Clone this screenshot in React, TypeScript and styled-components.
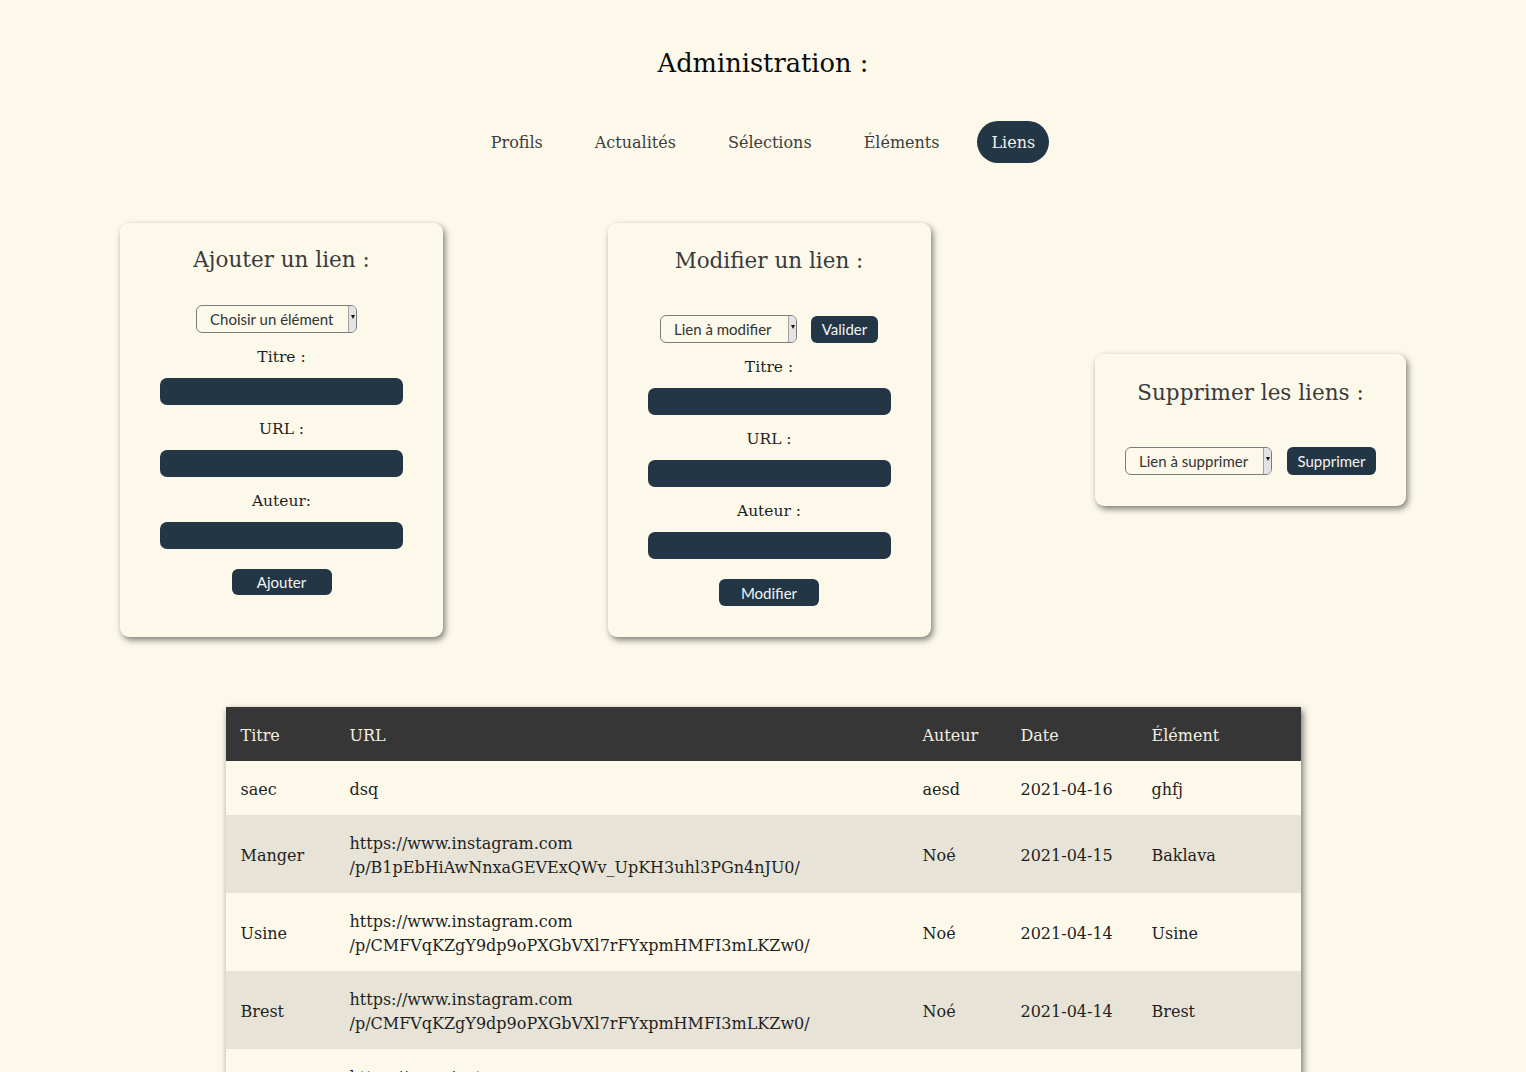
import React from "react";
import styled, { createGlobalStyle } from "styled-components";

const GlobalStyle = createGlobalStyle`
  html, body { margin: 0; padding: 0; background: #fcf9eb; }
  body { font-family: "DejaVu Serif", "Liberation Serif", serif; color: #222; }
  * { box-sizing: border-box; }
`;

const Page = styled.div`
  display: flex;
  flex-direction: column;
  align-items: center;
  padding-top: 48px;
  padding-bottom: 60px;
`;

const Title = styled.h1`
  margin: 0;
  font-size: 25.7px;
  line-height: 30px;
  font-weight: normal;
  color: #0a0a0a;
`;

const Nav = styled.nav`
  display: flex;
  gap: 24px;
  margin-top: 43px;
`;

const NavItem = styled.a<{ $active?: boolean }>`
  height: 42px;
  padding: 0 14px;
  display: flex;
  align-items: center;
  border-radius: 21px;
  font-size: 16px;
  text-decoration: none;
  color: ${(p) => (p.$active ? "#f4f1e6" : "#3d3d3d")};
  background: ${(p) => (p.$active ? "#233645" : "transparent")};
`;

const CardRow = styled.div`
  align-self: stretch;
  display: flex;
  justify-content: space-between;
  align-items: stretch;
  padding: 0 120px;
  margin-top: 60px;
`;

const Card = styled.section<{
  $width: number;
  $centered?: boolean;
  $padTop: number;
  $padBottom: number;
}>`
  width: ${(p) => p.$width}px;
  align-self: ${(p) => (p.$centered ? "center" : "stretch")};
  background: #fcf9eb;
  border-radius: 9px;
  box-shadow: 2px 3px 6px rgba(0, 0, 0, 0.5);
  padding: ${(p) => p.$padTop}px 40px ${(p) => p.$padBottom}px;
  display: flex;
  flex-direction: column;
  align-items: center;
`;

const CardTitle = styled.h2<{ $gap: number }>`
  margin: 0 0 ${(p) => p.$gap}px;
  font-size: 21.5px;
  line-height: 26px;
  font-weight: normal;
  color: #3a3a3a;
  white-space: nowrap;
`;

const FieldLabel = styled.label`
  display: block;
  margin: 14px 0 11px;
  font-size: 15.5px;
  line-height: 20px;
  color: #1e1e1e;
`;

const TextInput = styled.input`
  width: 100%;
  height: 27px;
  border: none;
  border-radius: 7px;
  background: #233645;
  color: #fff;
  outline: none;
`;

const ControlRow = styled.div<{ $gap: number }>`
  display: flex;
  align-items: center;
  gap: ${(p) => p.$gap}px;
`;

const SelectBox = styled.div<{ $width: number; $shift?: number }>`
  width: ${(p) => p.$width}px;
  height: 28px;
  margin-right: ${(p) => (p.$shift ?? 0) * 2}px;
  display: flex;
  align-items: stretch;
  border: 1px solid #7c7c7c;
  border-radius: 6px;
  overflow: hidden;
  background: #fcf9eb;
`;

const SelectText = styled.span`
  flex: 1;
  display: flex;
  align-items: center;
  padding-left: 13px;
  font-family: Lato, "Noto Sans", sans-serif;
  font-size: 15px;
  color: #333;
  white-space: nowrap;
`;

const SelectArrow = styled.span`
  width: 8px;
  background: #e3e3e3;
  border-left: 1px solid #a0a0a0;
  display: flex;
  justify-content: center;
  padding-top: 9px;

  &::after {
    content: "";
    width: 0;
    height: 0;
    border-left: 2.5px solid transparent;
    border-right: 2.5px solid transparent;
    border-top: 4px solid #111;
  }
`;

const Button = styled.button<{ $width: number; $height?: number; $top?: number }>`
  width: ${(p) => p.$width}px;
  height: ${(p) => p.$height ?? 27}px;
  margin-top: ${(p) => p.$top ?? 0}px;
  border: none;
  border-radius: 6px;
  background: #233645;
  color: #f3f3f3;
  font-family: Lato, "Noto Sans", sans-serif;
  font-size: 15px;
  padding: 0;
  cursor: pointer;
`;

const Table = styled.table`
  margin-top: 70px;
  width: 1075px;
  border-collapse: collapse;
  table-layout: fixed;
  box-shadow: 2px 3px 7px rgba(0, 0, 0, 0.55);
  font-size: 16px;
`;

const Col = styled.col<{ $w: number }>`
  width: ${(p) => p.$w}px;
`;

const Th = styled.th`
  background: #363636;
  color: #f3efe3;
  font-weight: normal;
  text-align: left;
  padding: 17px 15px 13px;
  line-height: 24px;
  height: 54px;
`;

const Tr = styled.tr<{ $alt: boolean }>`
  background: ${(p) => (p.$alt ? "#e7e3d7" : "#fcf9eb")};
`;

const Td = styled.td`
  padding: 17px 15px 13px;
  line-height: 24px;
  vertical-align: middle;
  color: #1f1f1f;
`;

const UrlLine = styled.span`
  display: block;
  white-space: nowrap;
`;

function Select({ width, label, shift }: { width: number; label: string; shift?: number }) {
  return (
    <SelectBox $width={width} $shift={shift}>
      <SelectText>{label}</SelectText>
      <SelectArrow />
    </SelectBox>
  );
}

type Row = { titre: string; url: string; auteur: string; date: string; element: string };

const rows: Row[] = [
  { titre: "saec", url: "dsq", auteur: "aesd", date: "2021-04-16", element: "ghfj" },
  {
    titre: "Manger",
    url: "https://www.instagram.com/p/B1pEbHiAwNnxaGEVExQWv_UpKH3uhl3PGn4nJU0/",
    auteur: "Noé",
    date: "2021-04-15",
    element: "Baklava",
  },
  {
    titre: "Usine",
    url: "https://www.instagram.com/p/CMFVqKZgY9dp9oPXGbVXl7rFYxpmHMFI3mLKZw0/",
    auteur: "Noé",
    date: "2021-04-14",
    element: "Usine",
  },
  {
    titre: "Brest",
    url: "https://www.instagram.com/p/CMFVqKZgY9dp9oPXGbVXl7rFYxpmHMFI3mLKZw0/",
    auteur: "Noé",
    date: "2021-04-14",
    element: "Brest",
  },
  {
    titre: "Port",
    url: "https://www.instagram.com/p/CMAqKZgY9dp9oPXGbVXl7rFYxpmHMFI3mLKZ12/",
    auteur: "Noé",
    date: "2021-04-13",
    element: "Port",
  },
];

function Url({ url }: { url: string }) {
  const idx = url.indexOf("/p/");
  if (idx < 0) return <>{url}</>;
  return (
    <>
      <UrlLine>{url.slice(0, idx)}</UrlLine>
      <UrlLine>{url.slice(idx)}</UrlLine>
    </>
  );
}

export default function App() {
  return (
    <>
      <GlobalStyle />
      <Page>
        <Title>Administration :</Title>
        <Nav>
          <NavItem>Profils</NavItem>
          <NavItem>Actualités</NavItem>
          <NavItem>Sélections</NavItem>
          <NavItem>Éléments</NavItem>
          <NavItem $active>Liens</NavItem>
        </Nav>

        <CardRow>
          <Card $width={323} $padTop={24} $padBottom={41}>
            <CardTitle $gap={32}>Ajouter un lien :</CardTitle>
            <Select width={161} label="Choisir un élément" shift={5} />
            <FieldLabel>Titre :</FieldLabel>
            <TextInput />
            <FieldLabel>URL :</FieldLabel>
            <TextInput />
            <FieldLabel>Auteur:</FieldLabel>
            <TextInput />
            <Button $width={100} $height={26} $top={20}>
              Ajouter
            </Button>
          </Card>

          <Card $width={323} $padTop={25} $padBottom={31}>
            <CardTitle $gap={41}>Modifier un lien :</CardTitle>
            <ControlRow $gap={14}>
              <Select width={137} label="Lien à modifier" />
              <Button $width={67}>Valider</Button>
            </ControlRow>
            <FieldLabel>Titre :</FieldLabel>
            <TextInput />
            <FieldLabel>URL :</FieldLabel>
            <TextInput />
            <FieldLabel>Auteur :</FieldLabel>
            <TextInput />
            <Button $width={100} $height={27} $top={20}>
              Modifier
            </Button>
          </Card>

          <Card $width={311} $centered $padTop={26} $padBottom={31}>
            <CardTitle $gap={41}>Supprimer les liens :</CardTitle>
            <ControlRow $gap={15}>
              <Select width={147} label="Lien à supprimer" />
              <Button $width={89} $height={28}>
                Supprimer
              </Button>
            </ControlRow>
          </Card>
        </CardRow>

        <Table>
          <colgroup>
            <Col $w={109} />
            <Col $w={573} />
            <Col $w={98} />
            <Col $w={131} />
            <Col $w={164} />
          </colgroup>
          <thead>
            <tr>
              <Th>Titre</Th>
              <Th>URL</Th>
              <Th>Auteur</Th>
              <Th>Date</Th>
              <Th>Élément</Th>
            </tr>
          </thead>
          <tbody>
            {rows.map((r, i) => (
              <Tr key={i} $alt={i % 2 === 1}>
                <Td>{r.titre}</Td>
                <Td>
                  <Url url={r.url} />
                </Td>
                <Td>{r.auteur}</Td>
                <Td>{r.date}</Td>
                <Td>{r.element}</Td>
              </Tr>
            ))}
          </tbody>
        </Table>
      </Page>
    </>
  );
}
